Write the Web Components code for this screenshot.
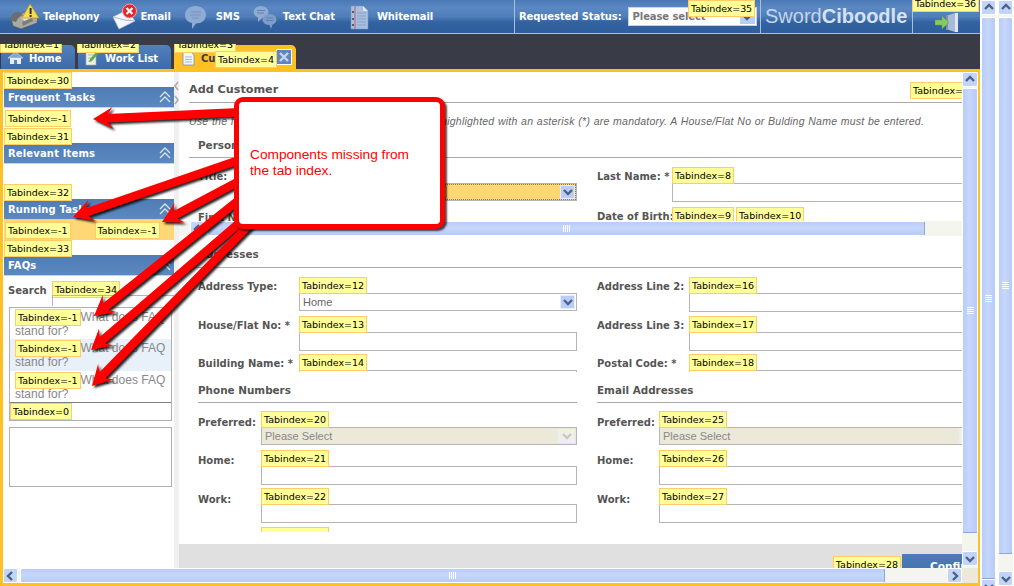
<!DOCTYPE html>
<html>
<head>
<meta charset="utf-8">
<title>Add Customer</title>
<style>
html,body{margin:0;padding:0;background:#fff;overflow:hidden}
body{width:1014px;height:586px;position:relative;font-family:"DejaVu Sans",sans-serif}
</style>
</head>
<body>
<crm-desktop></crm-desktop>
<crm-callout>Components missing from the tab index.</crm-callout>
<script>
const chevron=(dir,color='#4d6185')=>{
    const pts={up:'2,7 6,3 10,7',down:'2,4 6,8 10,4',left:'7,2 3,6 7,10',right:'4,2 8,6 4,10'}[dir]
    return `<svg width="12" height="12" viewBox="0 0 12 12"><polyline points="${pts}" fill="none" stroke="${color}" stroke-width="2.4"/></svg>`
}

class CrmTag extends HTMLElement{
    constructor(){
        super()
        this.attachShadow({mode:'open'}).innerHTML=`
        <style>
            :host{display:inline-block;box-sizing:border-box;height:17px;padding:0 2px;background:#ffff99;border:1px solid #ffcc66;
                font:9.500px/15px "DejaVu Sans",sans-serif;color:#000;white-space:nowrap;vertical-align:top}
        </style>Tabindex=<slot></slot>`
    }
}
customElements.define('crm-tag',CrmTag)

class CrmScroll extends HTMLElement{
    connectedCallback(){
        const horiz=this.getAttribute('dir')=='h'
        const before=this.getAttribute('before')||0
        const thumb=this.getAttribute('thumb')
        const noEnd=this.hasAttribute('noend')
        const grip=Array(4).fill('<i></i>').join('')
        this.attachShadow({mode:'open'}).innerHTML=`
        <style>
            :host{display:flex;flex:none;box-sizing:border-box;background:#f5f5ef;flex-direction:${horiz?'row':'column'};${horiz?'height:15px':'width:16px'}}
            .btn{flex:none;box-sizing:border-box;width:${horiz?'15px':'100%'};height:${horiz?'100%':'15px'};background:#c3d4fb;border:1px solid #fff;
                border-radius:2px;display:flex;align-items:center;justify-content:center}
            .gap{flex:none;${horiz?'width':'height'}:${before}px}
            .thumb{flex:none;box-sizing:border-box;${horiz?'width':'height'}:${thumb}px;${horiz?'height:100%':'width:100%'};
                background:linear-gradient(${horiz?'180deg':'90deg'},#b8cdf9,#c7d7fc 45%,#b6cbf8);
                border:1px solid #fff;${horiz?'border-right':'border-bottom'}:1px solid #8fa6d8;border-radius:2px;
                display:flex;align-items:center;justify-content:center;gap:1px;${horiz?'':'flex-direction:column'}}
            .thumb i{display:block;background:#fff;${horiz?'width:1px;height:7px':'width:7px;height:1px'}}
            .rest{flex:1}
        </style>
        <div class="btn">${chevron(horiz?'left':'up')}</div>
        <div class="gap"></div>
        <div class="thumb">${grip}</div>
        <div class="rest"></div>
        ${noEnd?'':`<div class="btn">${chevron(horiz?'right':'down')}</div>`}`
    }
}
customElements.define('crm-scroll',CrmScroll)

const icons={
    telephony:`<svg width="29" height="27" viewBox="0 0 29 27"><path d="M1 16 L18 7 L28 13 L27 20 L11 26 L3 23Z" fill="#a9a9a5" stroke="#555" stroke-width=".7"/><path d="M1 14 Q3 9 8 9 L13 12 Q8 14 6 19 L2 18Z" fill="#6d6d6a"/><path d="M11 15 L21 10 L25 13 L15 18Z" fill="#e4e4e0"/><path d="M12 19 L22 15 L23 18 L13 23Z" fill="#7d7d7a"/><path d="M20 1 L29 15 L12 15Z" fill="#f8dc50" stroke="#b89a20" stroke-width=".7"/><rect x="19.6" y="5" width="2" height="6" fill="#333"/><rect x="19.6" y="12" width="2" height="2" fill="#333"/></svg>`,
    email:`<svg width="25" height="27" viewBox="0 0 25 27"><path d="M1 14 L15 7 L23 18 L7 26Z" fill="#f4f6fb" stroke="#b9c6dc" stroke-width=".6"/><path d="M1 14 L13 17 L23 18" fill="none" stroke="#a9b8d2"/><circle cx="17.500" cy="8" r="7" fill="#e5262c" stroke="#f4a5a5"/><path d="M14.500 5 L20.500 11 M20.500 5 L14.500 11" stroke="#fff" stroke-width="2.200"/></svg>`,
    sms:`<svg width="23" height="26" viewBox="0 0 23 26"><path d="M11.500 2 C18 2 22 6 22 11 C22 16 17.500 19.500 12 19.500 L8 25 L8 19 C3.500 18 1 15 1 11 C1 6 5 2 11.500 2Z" fill="#8eabd4"/><path d="M7 8 H17 M6 11 H17 M8 14 H15" stroke="#7693bf" stroke-width="1.100"/></svg>`,
    chat:`<svg width="24" height="26" viewBox="0 0 24 26"><ellipse cx="8" cy="8" rx="7.500" ry="6" fill="#8eabd4"/><path d="M5 12 L5 18 L10 13Z" fill="#8eabd4"/><ellipse cx="16.500" cy="15.500" rx="7" ry="5.500" fill="#7d9cc9"/><path d="M16 20 L18 25 L20 19Z" fill="#7d9cc9"/><path d="M4 6.500 H12 M4 9 H11 M13 14 H20 M13 16.500 H20" stroke="#5f7fad"/></svg>`,
    white:`<svg width="19" height="26" viewBox="0 0 19 26"><path d="M1 2 H13 L18 7 V25 H1Z" fill="#a7bfe0" stroke="#7f99bf" stroke-width=".5"/><path d="M13 2 L18 7 H13Z" fill="#dde6f3"/><path d="M5 2 V25" stroke="#c25a6a"/><path d="M7 9 H16 M7 12 H16 M7 15 H16 M7 18 H16 M7 21 H16" stroke="#8aa3c7"/><circle cx="3" cy="8" r="1" fill="#344"/><circle cx="3" cy="15" r="1" fill="#344"/><circle cx="3" cy="21" r="1" fill="#344"/></svg>`,
    home:`<svg width="15" height="14" viewBox="0 0 15 14"><path d="M2 7 H13 V13 H2Z" fill="#e9eef5"/><path d="M0 7 L7.500 1 L15 7Z" fill="#7fa6d6" stroke="#dfe8f4" stroke-width=".6"/><rect x="6" y="9" width="3" height="4" fill="#5b86bb"/></svg>`,
    work:`<svg width="14" height="16" viewBox="0 0 14 16"><rect x="1" y="2" width="10" height="13" fill="#eef0ea" stroke="#a9ada0" stroke-width=".6"/><path d="M3 5 H9 M3 8 H8 M3 11 H7" stroke="#b7bcb0"/><path d="M12 1 L14 3 L7 11 L4 12 L5 9Z" fill="#62ab4d"/></svg>`,
    doc:`<svg width="13" height="15" viewBox="0 0 13 15"><path d="M1 1 H9 L12 4 V14 H1Z" fill="#f3f6fb" stroke="#7c93b5" stroke-width=".8"/><path d="M3 6 H10 M3 8.500 H10 M3 11 H10" stroke="#a6b8d1"/></svg>`,
    exit:`<svg width="23" height="20" viewBox="0 0 23 20"><path d="M11 3 L20 0 V19 L11 16Z" fill="#a8bad6"/><path d="M20 0 H23 V19 H20Z" fill="#dfe6f1"/><rect x="11" y="3" width="2" height="14" fill="#7c8fae"/><path d="M0 7 H7 V3 L14 9.500 L7 16 V12 H0Z" fill="#85c95f" stroke="#5da348" stroke-width=".5"/></svg>`
}

class CrmTopbar extends HTMLElement{
    connectedCallback(){
        const nav=[['telephony','Telephony',10,4],['email','Email',13,3],['sms','SMS',13,9],['chat','Text Chat',13,6],['white','Whitemail',15,8]]
        this.attachShadow({mode:'open'}).innerHTML=`
        <style>
            :host{display:flex;position:relative;height:34px;box-sizing:border-box;border-bottom:1px solid #a9c0dc;
                background:linear-gradient(#4a79b5,#5b88c3 24%,#4f7eba 50%,#32629f 68%,#2f5e9c);
                font:bold 10px "DejaVu Sans",sans-serif;letter-spacing:-.1px;color:#fff}
            nav{display:flex;width:514px;align-items:center}
            .item{display:flex;align-items:center}
            .cell{display:flex;align-items:center;box-sizing:border-box;border-left:1px solid #a9c0dc}
            .status{width:246px;padding-left:4px}
            .select{box-sizing:border-box;margin-left:6px;width:129px;height:19px;background:#fff;border:1px solid #c7d2e2;
                color:#777;display:flex;align-items:center;justify-content:space-between;padding:0 1px 0 4px;font-size:10px}
            .drop{width:15px;height:15px;background:#b9cdf8;display:flex;align-items:center;justify-content:center}
            .logo{width:152px;padding-left:4px;font:20px "Liberation Sans",sans-serif;letter-spacing:0;color:#c5d6eb}
            .logo b{font-weight:bold;color:#d6e2f1}
            .exit{flex:1;justify-content:center;padding-top:12px}
            crm-tag{position:absolute;z-index:2}
            .t35{left:688px;top:0}
            .t36{left:912px;top:-5px}
        </style>
        <nav>${nav.map(([ic,txt,ml,g])=>`<div class="item" style="margin-left:${ml}px;gap:${g}px">${icons[ic]}<span>${txt}</span></div>`).join('')}</nav>
        <div class="cell status">Requested Status:<div class="select">Please select<div class="drop">${chevron('down')}</div></div></div>
        <div class="cell logo"><span>Sword<b>Ciboodle</b></span></div>
        <div class="cell exit">${icons.exit}</div>
        <crm-tag class="t35">35</crm-tag><crm-tag class="t36">36</crm-tag>`
    }
}
customElements.define('crm-topbar',CrmTopbar)

class CrmTabs extends HTMLElement{
    connectedCallback(){
        const cut=[[1,0],[2,77],[3,174]].map(([n,x])=>`<div class="cut" style="left:${x}px"><crm-tag>${n}</crm-tag></div>`).join('')
        this.attachShadow({mode:'open'}).innerHTML=`
        <style>
            :host{display:flex;position:relative;height:35px;box-sizing:border-box;padding:11px 0 0 1px;gap:3px;background:#393c46;
                font:bold 10px "DejaVu Sans",sans-serif;color:#fff;overflow:hidden}
            .tab{box-sizing:border-box;display:flex;align-items:center;gap:6px;height:24px;border-radius:5px 5px 0 0;
                background:linear-gradient(#5280bc,#3b6ba9);padding:2px 0 0 7px}
            .home{width:74px}
            .work{width:93px}
            .cust{width:122px;background:#fdc025;color:#3a3d47;padding-left:8px;position:relative}
            .close{position:absolute;left:102px;top:4px;box-sizing:border-box;width:16px;height:16px;background:#5e87bd;border:1px solid #fff;
                color:#c7d6ea;display:flex;align-items:center;justify-content:center}
            .cut{position:absolute;top:10px;height:9px;overflow:hidden;z-index:2}
            .cut crm-tag{margin-top:-8px}
            .t4{position:absolute;z-index:2;left:215px;top:17px}
        </style>
        <div class="tab home">${icons.home}<span>Home</span></div>
        <div class="tab work">${icons.work}<span>Work List</span></div>
        <div class="tab cust">${icons.doc}<span>Customer</span>
            <div class="close"><svg width="10" height="10" viewBox="0 0 10 10"><path d="M1 1 L9 9 M9 1 L1 9" stroke="#c7d6ea" stroke-width="2.400"/></svg></div>
        </div>
        ${cut}<crm-tag class="t4">4</crm-tag>`
    }
}
customElements.define('crm-tabs',CrmTabs)

class CrmPanel extends HTMLElement{
    connectedCallback(){
        this.attachShadow({mode:'open'}).innerHTML=`
        <style>
            :host{display:block}
            crm-tag{position:relative;z-index:2;margin-bottom:-2px;display:block;width:max-content}
            .head{box-sizing:border-box;height:21px;background:linear-gradient(#4f7cb6,#5d88c0);border-bottom:1px solid #ffcc66;
                color:#fff;font:bold 10px/21px "DejaVu Sans",sans-serif;letter-spacing:.15px;padding-left:4px;display:flex;justify-content:space-between}
            .head svg{margin:4px 2px 0 0}
        </style>
        <crm-tag>${this.getAttribute('tag')}</crm-tag>
        <div class="head"><span>${this.getAttribute('title')}</span>
            <svg width="14" height="12" viewBox="0 0 14 12"><path d="M2 6 L7 1 L12 6 M2 11 L7 6 L12 11" fill="none" stroke="#d7e3f2" stroke-width="1.300"/></svg>
        </div>
        <slot></slot>`
    }
}
customElements.define('crm-panel',CrmPanel)

class CrmSidebar extends HTMLElement{
    connectedCallback(){
        const q=[0,1,2].map(i=>`<div class="q ${i==1?'alt':''}"><crm-tag>-1</crm-tag>What does FAQ stand for?</div>`).join('')
        this.attachShadow({mode:'open'}).innerHTML=`
        <style>
            :host{display:block;box-sizing:border-box;width:171px;flex:none;padding-left:1px;background:#fff;overflow:hidden}
            .body{height:20px;box-sizing:border-box;padding:2px 0 0 1px}
            .busy{background:#ffd875;display:flex;gap:24px}
            .faq{padding:5px 0 0 0;font:12px "Liberation Sans",sans-serif;color:#888}
            .search{display:flex;height:26px;padding-left:4px;font:bold 10px "DejaVu Sans",sans-serif;color:#555}
            .search span{width:44px;padding-top:4px}
            .search .field{flex:1;margin-right:-6px;display:flex;flex-direction:column;align-items:flex-start}
            .search .box{align-self:stretch;height:10px;border:1px solid #b5b5b5;border-width:1px 0 0 1px;margin-top:-3px}
            .list{box-sizing:border-box;margin-left:5px;width:163px;height:114px;border:1px solid #b0b0b0;display:flex;flex-direction:column}
            .q{box-sizing:border-box;height:32px;padding:1px 0 0 5px;line-height:14px}
            .alt{background:#e8f0fa}
            .q crm-tag{vertical-align:baseline;margin-bottom:-3px}
            .more{border-top:1px solid #808080;height:17px;margin-top:0}
            .empty{box-sizing:border-box;margin:6px 0 0 5px;width:163px;height:60px;border:1px solid #b0b0b0}
        </style>
        <crm-panel tag="30" title="Frequent Tasks"><div class="body"><crm-tag>-1</crm-tag></div></crm-panel>
        <crm-panel tag="31" title="Relevant Items"><div class="body"></div></crm-panel>
        <crm-panel tag="32" title="Running Tasks"><div class="body busy"><crm-tag>-1</crm-tag><crm-tag>-1</crm-tag></div></crm-panel>
        <crm-panel tag="33" title="FAQs">
            <div class="faq">
                <div class="search"><span>Search</span><div class="field"><crm-tag>34</crm-tag><div class="box"></div></div></div>
                <div class="list">${q}<div class="more"><crm-tag>0</crm-tag></div></div>
                <div class="empty"></div>
            </div>
        </crm-panel>`
    }
}
customElements.define('crm-sidebar',CrmSidebar)

class CrmField extends HTMLElement{
    connectedCallback(){
        const kind=this.getAttribute('kind')||'input'
        const tag=this.getAttribute('tag')
        const tag2=this.getAttribute('tag2')
        const value=this.getAttribute('value')||''
        const disabled=kind=='disabled'
        const drop=kind=='input'?'':`<div class="drop">${chevron('down',disabled?'#c9c9c0':'#4d6185')}</div>`
        this.attachShadow({mode:'open'}).innerHTML=`
        <style>
            :host{display:grid;grid-template-columns:${this.getAttribute('lw')}px 1fr;height:38.5px;font:bold 10px "DejaVu Sans",sans-serif;color:#555}
            label{padding-top:var(--lp,4px);white-space:nowrap}
            label small{font:11px "Liberation Sans",sans-serif}
            .tags{display:flex;height:16px;gap:2px;position:relative;z-index:1}
            .ctl{box-sizing:border-box;height:19px;border:1px solid #b5b5b5;background:#fff;display:flex;justify-content:space-between;align-items:center;
                font:11px "Liberation Sans",sans-serif;color:#666;padding:0 1px 0 3px}
            .select{height:18px}
            .title{background:#ffd875;outline:1px dotted #8c7a40;outline-offset:-2px}
            .disabled{background:#ece9d8;color:#888}
            .drop{width:15px;height:14px;background:#b9cdf8;display:flex;align-items:center;justify-content:center;box-sizing:border-box;border:1px solid #e6edfd}
            .disabled .drop{background:#f0efe8;width:17px}
            .wide{margin-right:-16px}
        </style>
        <label>${this.getAttribute('label')}${this.hasAttribute('star')?' <small>*</small>':''}</label>
        <div class="${this.hasAttribute('wide')?'wide':''}">
            <div class="tags">${tag?`<crm-tag>${tag}</crm-tag>`:''}${tag2?`<crm-tag>${tag2}</crm-tag>`:''}</div>
            <div class="ctl ${kind=='input'?'':'select'} ${kind}"><span>${value}</span>${drop}</div>
        </div>`
    }
}
customElements.define('crm-field',CrmField)

class CrmForm extends HTMLElement{
    connectedCallback(){
        this.attachShadow({mode:'open'}).innerHTML=`
        <style>
            :host{display:flex;flex-direction:column;flex:1;min-width:0;background:#fff;position:relative;overflow:hidden}
            .top{height:149px;flex:none;overflow:hidden;box-sizing:border-box;padding:0 0 0 10px;position:relative}
            h1{margin:0;height:31px;box-sizing:border-box;padding-top:11px;font:bold 11.200px "DejaVu Sans",sans-serif;color:#555;border-bottom:1px solid #aaa}
            .note{font:italic 10.500px/14px "Liberation Sans",sans-serif;color:#666;margin:11px 0 0;letter-spacing:.23px;white-space:nowrap;word-spacing:.4px}
            h2{margin:0;font:bold 10.400px "DejaVu Sans",sans-serif;color:#555;border-bottom:1px solid #aaa;box-sizing:border-box}
            .top h2{margin-top:6px;height:24px;padding:5px 0 0 9px}
            .cols{display:grid;grid-template-columns:379px 1fr;column-gap:20px;padding-left:9px}
            .top .cols{padding-top:9px}
            .top crm-field{height:40px}
            .t{position:absolute;left:731px;top:10px}
            .bottom{height:296px;flex:none;overflow:hidden;box-sizing:border-box;padding-left:10px}
            .bottom>h2{height:32px;padding:12px 0 0 9px}
            .addr{height:95px;overflow:hidden;margin-left:9px;padding:9px 0 0 0;box-sizing:content-box}
            .addr .cols{padding-left:0}
            .phones{padding-left:9px;--lp:5.500px}
            .phones h2{height:31px;padding-top:12px;margin-bottom:8px}
            .phones .cols{padding-left:0}
            .gap12{height:12px;flex:none}
            .hs{padding-left:11px}
            footer{flex:1;background:#e0e0e0;display:flex;justify-content:flex-end;align-items:flex-start;gap:1px;padding-top:10px;box-sizing:border-box;overflow:hidden}
            footer crm-tag{margin-top:2px}
            .btn{box-sizing:border-box;width:60px;height:30px;flex:none;background:linear-gradient(#4f7cb6,#3a6aa8);color:#fff;font:bold 10.500px "DejaVu Sans",sans-serif;padding:6px 0 0 28px;overflow:hidden;white-space:nowrap}
        </style>
        <div class="top">
            <h1>Add Customer</h1>
            <crm-tag class="t">29</crm-tag>
            <p class="note">Use the form below to create a customer. All fields highlighted with an asterisk (*) are mandatory. A House/Flat No or Bulding Name must be entered.</p>
            <h2>Personal Details</h2>
            <div class="cols">
                <div>
                    <crm-field lw="101" label="Title:" kind="select title"></crm-field>
                    <crm-field lw="101" label="First Name:" star></crm-field>
                </div>
                <div>
                    <crm-field lw="75" label="Last Name: *" tag="8" wide></crm-field>
                    <crm-field lw="75" label="Date of Birth:" tag="9" tag2="10" wide></crm-field>
                </div>
            </div>
        </div>
        <crm-scroll class="hs" dir="h" before="2" thumb="718" noend></crm-scroll>
        <div class="bottom">
            <h2>Addresses</h2>
            <div class="addr">
                <div class="cols">
                    <div>
                        <crm-field lw="101" label="Address Type:" tag="12" kind="select" value="Home"></crm-field>
                        <crm-field lw="101" label="House/Flat No: *" tag="13"></crm-field>
                        <crm-field lw="101" label="Building Name: *" tag="14"></crm-field>
                    </div>
                    <div>
                        <crm-field lw="92" label="Address Line 2:" tag="16" wide></crm-field>
                        <crm-field lw="92" label="Address Line 3:" tag="17" wide></crm-field>
                        <crm-field lw="92" label="Postal Code: *" tag="18" wide></crm-field>
                    </div>
                </div>
            </div>
            <div class="phones">
                <div class="cols">
                    <div>
                        <h2>Phone Numbers</h2>
                        <crm-field lw="63" label="Preferred:" tag="20" kind="disabled" value="Please Select"></crm-field>
                        <crm-field lw="63" label="Home:" tag="21"></crm-field>
                        <crm-field lw="63" label="Work:" tag="22"></crm-field>
                        <crm-field lw="63" label="" tag="23"></crm-field>
                    </div>
                    <div>
                        <h2>Email Addresses</h2>
                        <crm-field lw="62" label="Preferred:" tag="25" kind="disabled" value="Please Select" wide></crm-field>
                        <crm-field lw="62" label="Home:" tag="26" wide></crm-field>
                        <crm-field lw="62" label="Work:" tag="27" wide></crm-field>
                    </div>
                </div>
            </div>
        </div>
        <div class="gap12"></div>
        <footer><crm-tag>28</crm-tag><div class="btn">Confirm</div></footer>`
    }
}
customElements.define('crm-form',CrmForm)

class CrmDesktop extends HTMLElement{
    connectedCallback(){
        this.attachShadow({mode:'open'}).innerHTML=`
        <style>
            :host{display:flex;height:586px;gap:2px}
            .app{width:980px;flex:none;display:flex;flex-direction:column;margin-right:-1px}
            .frame{height:517px;box-sizing:border-box;border:solid #fdc025;border-width:3px 2px 3px 3px;display:flex;flex-direction:column;background:#fff}
            .row{flex:1;display:flex;min-height:0}
            .gutter{flex:none;width:5px;background:#f0f0f0;display:flex;flex-direction:column;align-items:center;padding-top:8px;gap:2px;overflow:hidden}
            .gutter svg{flex:none}
            .vs{width:16px;padding-bottom:2px}
            .bar{height:586px;width:15px}
            .hrow{display:flex;height:15px;flex:none}
            .hbar{flex:1;background:#f5f5ef}
            .corner{width:16px;background:#ece9d8}
        </style>
        <div class="app">
            <crm-topbar></crm-topbar>
            <crm-tabs></crm-tabs>
            <div class="frame">
                <div class="row">
                    <crm-sidebar></crm-sidebar>
                    <div class="gutter">
                        <svg width="5" height="12" viewBox="0 0 5 12"><polyline points="4,2 1,6 4,10" fill="none" stroke="#aaa" stroke-width="1.500"/></svg>
                        <svg width="5" height="12" viewBox="0 0 5 12"><polyline points="1,2 4,6 1,10" fill="none" stroke="#aaa" stroke-width="1.500"/></svg>
                    </div>
                    <crm-form></crm-form>
                    <crm-scroll class="vs" before="1" thumb="445"></crm-scroll>
                </div>
                <div class="hrow"><crm-scroll class="hbar" dir="h" before="2" thumb="865"></crm-scroll><div class="corner"></div></div>
            </div>
        </div>
        <crm-scroll class="bar" before="2" thumb="562"></crm-scroll>
        <crm-scroll class="bar" before="2" thumb="537"></crm-scroll>`
    }
}
customElements.define('crm-desktop',CrmDesktop)

// red arrows and the note box, they lie over everything else
const arrow=(x1,y1,x2,y2)=>{
    const len=Math.hypot(x2-x1,y2-y1),ux=(x2-x1)/len,uy=(y2-y1)/len,nx=-uy,ny=ux
    const p=(along,side)=>`${(x2-ux*along+nx*side).toFixed(1)},${(y2-uy*along+ny*side).toFixed(1)}`
    const w=4.2
    return `${x1+nx*w},${y1+ny*w} ${p(15,w)} ${p(20,11)} ${p(0,0)} ${p(20,-11)} ${p(15,-w)} ${x1-nx*w},${y1-ny*w}`
}
class CrmCallout extends HTMLElement{
    connectedCallback(){
        const lines=[[245,112,93,119],[245,158,73,217],[245,178,162,222],[245,195,94,316],[245,218,91,350],[250,224,92,386]]
        this.attachShadow({mode:'open'}).innerHTML=`
        <style>
            :host{position:absolute;left:0;top:0;width:1014px;height:586px;z-index:10;pointer-events:none}
            svg{position:absolute;left:0;top:0;filter:drop-shadow(2px 2px 1px rgba(0,0,0,.85))}
            .box{position:absolute;left:234px;top:97px;width:211px;height:132px;box-sizing:border-box;background:#fff;border:5px solid #f00;border-radius:9px;
                box-shadow:2px 2px 2px rgba(0,0,0,.7);padding:45px 20px 0 11px;color:#f00;font:13.700px/15.500px "Liberation Sans",sans-serif}
        </style>
        <svg width="1014" height="586">${lines.map(l=>`<polygon points="${arrow(...l)}" fill="#f00"/>`).join('')}</svg>
        <div class="box"><slot></slot></div>`
    }
}
customElements.define('crm-callout',CrmCallout)
</script>
</body>
</html>
